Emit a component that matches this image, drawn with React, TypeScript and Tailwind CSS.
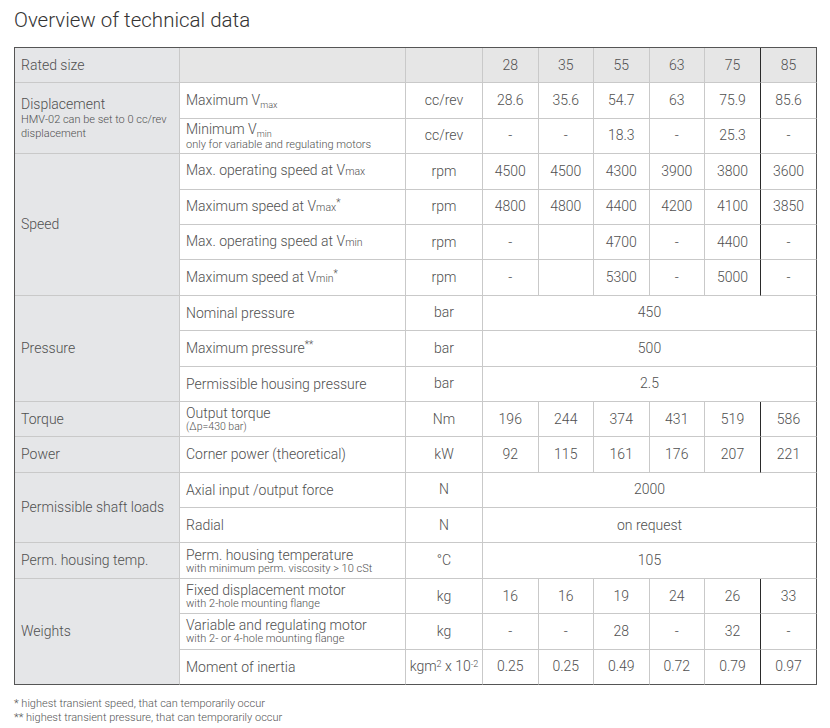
import React from 'react';

type Cell = string | React.ReactNode;

const VALUES_LINE = 'border-r-[#2a2a2a]';

const Sub = ({ children }: { children: React.ReactNode }) => (
  <span className="text-[9px] relative top-[3px]">{children}</span>
);

const Small = ({ children }: { children: React.ReactNode }) => (
  <span className="text-[10.5px]">{children}</span>
);

const Note = ({ children }: { children: React.ReactNode }) => (
  <div className="text-[11px] leading-[13.5px] whitespace-nowrap">{children}</div>
);

const tdBase = 'border-r border-b border-[#c9c9c9] align-middle';

const ValueCells = ({ values, last }: { values: Cell[]; last?: boolean }) => (
  <>
    {values.map((v, i) => (
      <td
        key={i}
        className={`${tdBase} text-center ${i === 4 ? VALUES_LINE : ''} ${i === 5 ? 'border-r-[#555]' : ''} ${last ? 'border-b-[#555]' : ''}`}
      >
        {v}
      </td>
    ))}
  </>
);

const Span = ({ value, last }: { value: Cell; last?: boolean }) => (
  <td colSpan={6} className={`${tdBase} text-center border-r-[#555] ${last ? 'border-b-[#555]' : ''}`}>
    {value}
  </td>
);

const Cat = ({ rows, children, last }: { rows?: number; children: React.ReactNode; last?: boolean }) => (
  <td rowSpan={rows} className={`${tdBase} bg-[#e5e6e8] px-[6px] ${last ? 'border-b-[#555]' : ''}`}>
    {children}
  </td>
);

const Desc = ({ children, last }: { children: React.ReactNode; last?: boolean }) => (
  <td className={`${tdBase} px-[6px] leading-[16px] ${last ? 'border-b-[#555]' : ''}`}>{children}</td>
);

const Unit = ({ children, last }: { children: React.ReactNode; last?: boolean }) => (
  <td className={`${tdBase} text-center whitespace-nowrap ${last ? 'border-b-[#555]' : ''}`}>{children}</td>
);

const Row = ({ children }: { children: React.ReactNode }) => <tr className="h-[35.4px]">{children}</tr>;

export default function App() {
  return (
    <div className="w-[830px] h-[728px] bg-white pl-[14px] pt-[5px] text-[#505050] font-light font-['Roboto','Lato',sans-serif]">
      <h1 className="text-[20.5px] leading-[30px] text-[#333] font-light">Overview of technical data</h1>

      <table className="mt-[12px] w-[803px] table-fixed border-separate border-spacing-0 border-l border-t border-[#555] text-[14px]">
        <colgroup>
          <col className="w-[165px]" />
          <col className="w-[226px]" />
          <col className="w-[77px]" />
          <col className="w-[55.5px]" />
          <col className="w-[55.5px]" />
          <col className="w-[55.5px]" />
          <col className="w-[55.5px]" />
          <col className="w-[56px]" />
          <col className="w-[56px]" />
        </colgroup>
        <tbody>
          <tr className="h-[35.4px] bg-[#e6e6e6]">
            <td className={`${tdBase} px-[6px] bg-[#e5e6e8]`}>Rated size</td>
            <td className={tdBase}></td>
            <td className={tdBase}></td>
            <ValueCells values={['28', '35', '55', '63', '75', '85']} />
          </tr>

          <Row>
            <Cat rows={2}>
              <div className="leading-[17px]">Displacement</div>
              <Note>HMV-02 can be set to 0 cc/rev</Note>
              <Note>displacement</Note>
            </Cat>
            <Desc>
              Maximum V<Sub>max</Sub>
            </Desc>
            <Unit>cc/rev</Unit>
            <ValueCells values={['28.6', '35.6', '54.7', '63', '75.9', '85.6']} />
          </Row>
          <Row>
            <Desc>
              <div className="leading-[16px]">
                Minimum V<Sub>min</Sub>
              </div>
              <div className="text-[11px] leading-[12px]">only for variable and regulating motors</div>
            </Desc>
            <Unit>cc/rev</Unit>
            <ValueCells values={['-', '-', '18.3', '-', '25.3', '-']} />
          </Row>

          <Row>
            <Cat rows={4}>Speed</Cat>
            <Desc>
              Max. operating speed at V<Small>max</Small>
            </Desc>
            <Unit>rpm</Unit>
            <ValueCells values={['4500', '4500', '4300', '3900', '3800', '3600']} />
          </Row>
          <Row>
            <Desc>
              Maximum speed at V<Small>max</Small>
              <sup className="text-[10px]">*</sup>
            </Desc>
            <Unit>rpm</Unit>
            <ValueCells values={['4800', '4800', '4400', '4200', '4100', '3850']} />
          </Row>
          <Row>
            <Desc>
              Max. operating speed at V<Small>min</Small>
            </Desc>
            <Unit>rpm</Unit>
            <ValueCells values={['-', '', '4700', '-', '4400', '-']} />
          </Row>
          <Row>
            <Desc>
              Maximum speed at V<Small>min</Small>
              <sup className="text-[10px]">*</sup>
            </Desc>
            <Unit>rpm</Unit>
            <ValueCells values={['-', '', '5300', '-', '5000', '-']} />
          </Row>

          <Row>
            <Cat rows={3}>Pressure</Cat>
            <Desc>Nominal pressure</Desc>
            <Unit>bar</Unit>
            <Span value="450" />
          </Row>
          <Row>
            <Desc>
              Maximum pressure<sup className="text-[10px]">**</sup>
            </Desc>
            <Unit>bar</Unit>
            <Span value="500" />
          </Row>
          <Row>
            <Desc>Permissible housing pressure</Desc>
            <Unit>bar</Unit>
            <Span value="2.5" />
          </Row>

          <Row>
            <Cat>Torque</Cat>
            <Desc>
              <div className="leading-[16px]">Output torque</div>
              <div className="text-[10.5px] leading-[12px]">(Δp=430 bar)</div>
            </Desc>
            <Unit>Nm</Unit>
            <ValueCells values={['196', '244', '374', '431', '519', '586']} />
          </Row>
          <Row>
            <Cat>Power</Cat>
            <Desc>Corner power (theoretical)</Desc>
            <Unit>kW</Unit>
            <ValueCells values={['92', '115', '161', '176', '207', '221']} />
          </Row>

          <Row>
            <Cat rows={2}>Permissible shaft loads</Cat>
            <Desc>Axial input /output force</Desc>
            <Unit>N</Unit>
            <Span value="2000" />
          </Row>
          <Row>
            <Desc>Radial</Desc>
            <Unit>N</Unit>
            <Span value="on request" />
          </Row>

          <Row>
            <Cat>Perm. housing temp.</Cat>
            <Desc>
              <div className="leading-[16px]">Perm. housing temperature</div>
              <div className="text-[11px] leading-[12px]">with minimum perm. viscosity &gt; 10 cSt</div>
            </Desc>
            <Unit>°C</Unit>
            <Span value="105" />
          </Row>

          <Row>
            <Cat rows={3} last>
              Weights
            </Cat>
            <Desc>
              <div className="leading-[16px]">Fixed displacement motor</div>
              <div className="text-[11px] leading-[12px]">with 2-hole mounting flange</div>
            </Desc>
            <Unit>kg</Unit>
            <ValueCells values={['16', '16', '19', '24', '26', '33']} />
          </Row>
          <Row>
            <Desc>
              <div className="leading-[16px]">Variable and regulating motor</div>
              <div className="text-[11px] leading-[12px]">with 2- or 4-hole mounting flange</div>
            </Desc>
            <Unit>kg</Unit>
            <ValueCells values={['-', '-', '28', '-', '32', '-']} />
          </Row>
          <Row>
            <Desc last>Moment of inertia</Desc>
            <Unit last>
              kgm<sup className="text-[9px]">2</sup> x 10<sup className="text-[9px]">-2</sup>
            </Unit>
            <ValueCells last values={['0.25', '0.25', '0.49', '0.72', '0.79', '0.97']} />
          </Row>
        </tbody>
      </table>

      <div className="mt-[12px] text-[11px] leading-[14px] text-[#555]">
        <div>* highest transient speed, that can temporarily occur</div>
        <div>** highest transient pressure, that can temporarily occur</div>
      </div>
    </div>
  );
}
